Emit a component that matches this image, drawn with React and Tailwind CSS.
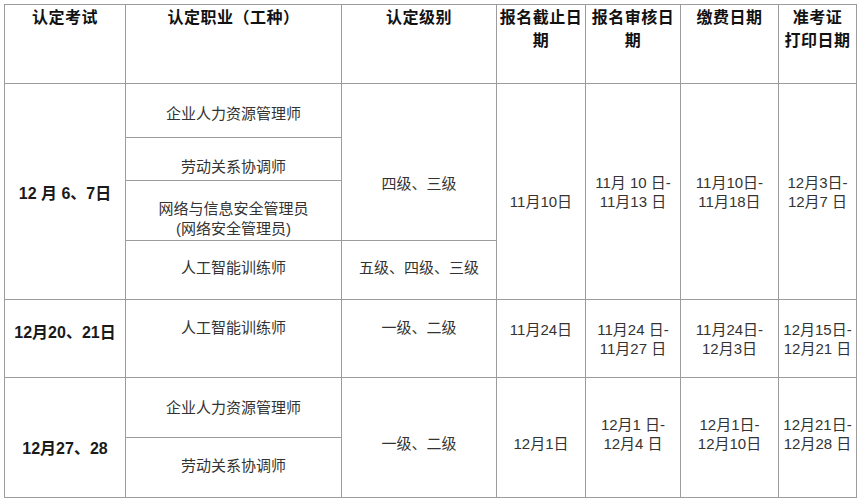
import React from 'react';

const cell = 'border border-[#9c9c9c] text-center align-middle p-0';
const head = `${cell} !align-top font-bold text-[16px] leading-[23px] tracking-[0.03em] text-[#111] pt-[1px]`;
const exam = `${cell} font-bold text-[16px] text-[#1a1a1a]`;
const body = `${cell} text-[15px] leading-[20px] text-[#333]`;

const Dates = ({ a, b }) => (
  <span className="block leading-[19px]">
    {a}
    <br />
    {b}
  </span>
);

export default function App() {
  return (
    <div className="w-[864px] h-[500px] bg-white pt-1 pl-1 font-['Liberation_Sans','Noto_Sans_CJK_SC',sans-serif]">
      <table className="table-fixed border-collapse w-[852px]">
        <colgroup>
          <col className="w-[121px]" />
          <col className="w-[216px]" />
          <col className="w-[155px]" />
          <col className="w-[89px]" />
          <col className="w-[95px]" />
          <col className="w-[98px]" />
          <col className="w-[78px]" />
        </colgroup>
        <thead>
          <tr className="h-[79px]">
            <th className={head}>认定考试</th>
            <th className={head}>认定职业（工种）</th>
            <th className={head}>认定级别</th>
            <th className={head}>报名截止日<br />期</th>
            <th className={head}>报名审核日<br />期</th>
            <th className={head}>缴费日期</th>
            <th className={head}>准考证<br />打印日期</th>
          </tr>
        </thead>
        <tbody>
          {/* 12月6、7日 */}
          <tr className="h-[54px]">
            <td rowSpan={4} className={`${exam} pt-1`}>12 月 6、7日</td>
            <td className={`${body} pt-1.5`}>企业人力资源管理师</td>
            <td rowSpan={3} className={`${body} pt-[43px]`}>四级、三级</td>
            <td rowSpan={4} className={`${body} pt-5`}>11月10日</td>
            <td rowSpan={4} className={body}><Dates a="11月 10 日-" b="11月13 日" /></td>
            <td rowSpan={4} className={body}><Dates a="11月10日-" b="11月18日" /></td>
            <td rowSpan={4} className={body}><Dates a="12月3日-" b="12月7 日" /></td>
          </tr>
          <tr className="h-[43px]">
            <td className={`${body} pt-[15px]`}>劳动关系协调师</td>
          </tr>
          <tr className="h-[60px]">
            <td className={`${body} pt-4`}>网络与信息安全管理员<br />(网络安全管理员)</td>
          </tr>
          <tr className="h-[59px]">
            <td className={`${body} pb-[5px]`}>人工智能训练师</td>
            <td className={`${body} pb-[5px]`}>五级、四级、三级</td>
          </tr>

          {/* 12月20、21日 */}
          <tr className="h-[78px]">
            <td className={`${exam} pb-3`}>12月20、21日</td>
            <td className={`${body} pb-[22px]`}>人工智能训练师</td>
            <td className={`${body} pb-[22px]`}>一级、二级</td>
            <td className={`${body} pb-[18px]`}>11月24日</td>
            <td className={body}><Dates a="11月24 日-" b="11月27  日" /></td>
            <td className={body}><Dates a="11月24日-" b="12月3日" /></td>
            <td className={body}><Dates a="12月15日-" b="12月21 日" /></td>
          </tr>

          {/* 12月27、28 */}
          <tr className="h-[60px]">
            <td rowSpan={2} className={`${exam} pt-[22px]`}>12月27、28</td>
            <td className={body}>企业人力资源管理师</td>
            <td rowSpan={2} className={`${body} pt-3`}>一级、二级</td>
            <td rowSpan={2} className={`${body} pt-3`}>12月1日</td>
            <td rowSpan={2} className={`${body} pb-2`}><Dates a="12月1 日-" b="12月4 日" /></td>
            <td rowSpan={2} className={`${body} pb-2`}><Dates a="12月1日-" b="12月10日" /></td>
            <td rowSpan={2} className={`${body} pb-2`}><Dates a="12月21日-" b="12月28 日" /></td>
          </tr>
          <tr className="h-[60px]">
            <td className={`${body} pb-1`}>劳动关系协调师</td>
          </tr>
        </tbody>
      </table>
    </div>
  );
}
